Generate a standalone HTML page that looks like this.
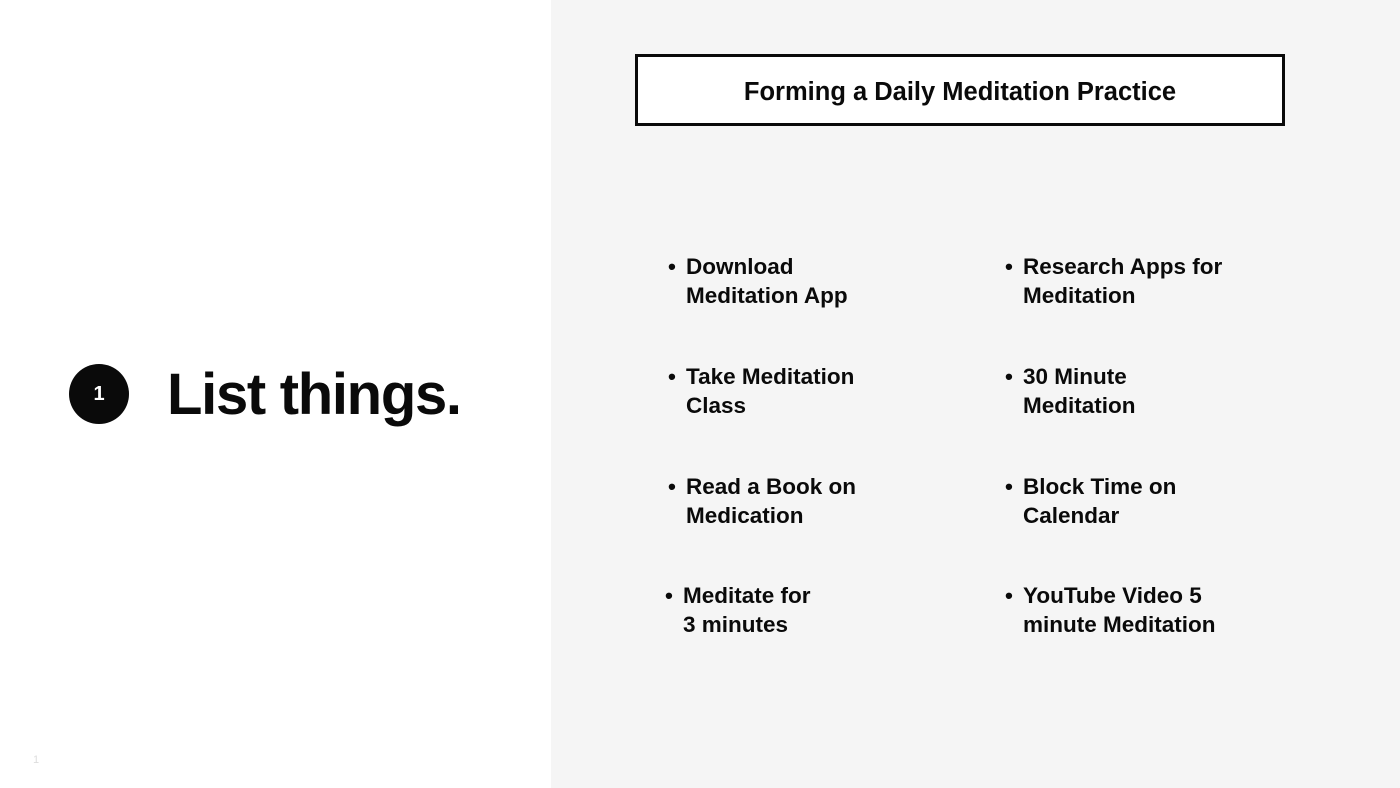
<!DOCTYPE html>
<html><head><style>
body{margin:0;width:1400px;height:788px;position:relative;overflow:hidden;background:#fff;font-family:"Liberation Sans",sans-serif;font-weight:bold;color:#0a0a0a}
.right{position:absolute;left:551px;top:0;width:849px;height:788px;background:#f5f5f5}
.box{position:absolute;left:635px;top:54px;width:644px;height:66px;border:3px solid #0a0a0a;background:#fff;text-align:center;line-height:70px;font-size:25.5px}
.circ{position:absolute;left:69px;top:364px;width:60px;height:60px;border-radius:50%;background:#0a0a0a;color:#fff;text-align:center;line-height:60px;font-size:20px}
.h{position:absolute;left:167px;top:360px;font-size:58px;letter-spacing:-1.3px;line-height:70px}
.it{position:absolute;font-size:22.5px;line-height:29px}
.it b{position:absolute;left:-18px;top:0}
.pg{position:absolute;left:33px;top:754px;font-size:11px;color:#ddd;font-weight:normal}
</style></head><body>
<div class="right"></div>
<div class="box">Forming a Daily Meditation Practice</div>
<div class="circ">1</div>
<div class="h">List things.</div>
<div class="it" style="left:686px;top:252px"><b>•</b>Download<br>Meditation App</div>
<div class="it" style="left:686px;top:362px"><b>•</b>Take Meditation<br>Class</div>
<div class="it" style="left:686px;top:472px"><b>•</b>Read a Book on<br>Medication</div>
<div class="it" style="left:683px;top:581px"><b>•</b>Meditate for<br>3 minutes</div>
<div class="it" style="left:1023px;top:252px"><b>•</b>Research Apps for<br>Meditation</div>
<div class="it" style="left:1023px;top:362px"><b>•</b>30 Minute<br>Meditation</div>
<div class="it" style="left:1023px;top:472px"><b>•</b>Block Time on<br>Calendar</div>
<div class="it" style="left:1023px;top:581px"><b>•</b>YouTube Video 5<br>minute Meditation</div>
<div class="pg">1</div>
</body></html>
